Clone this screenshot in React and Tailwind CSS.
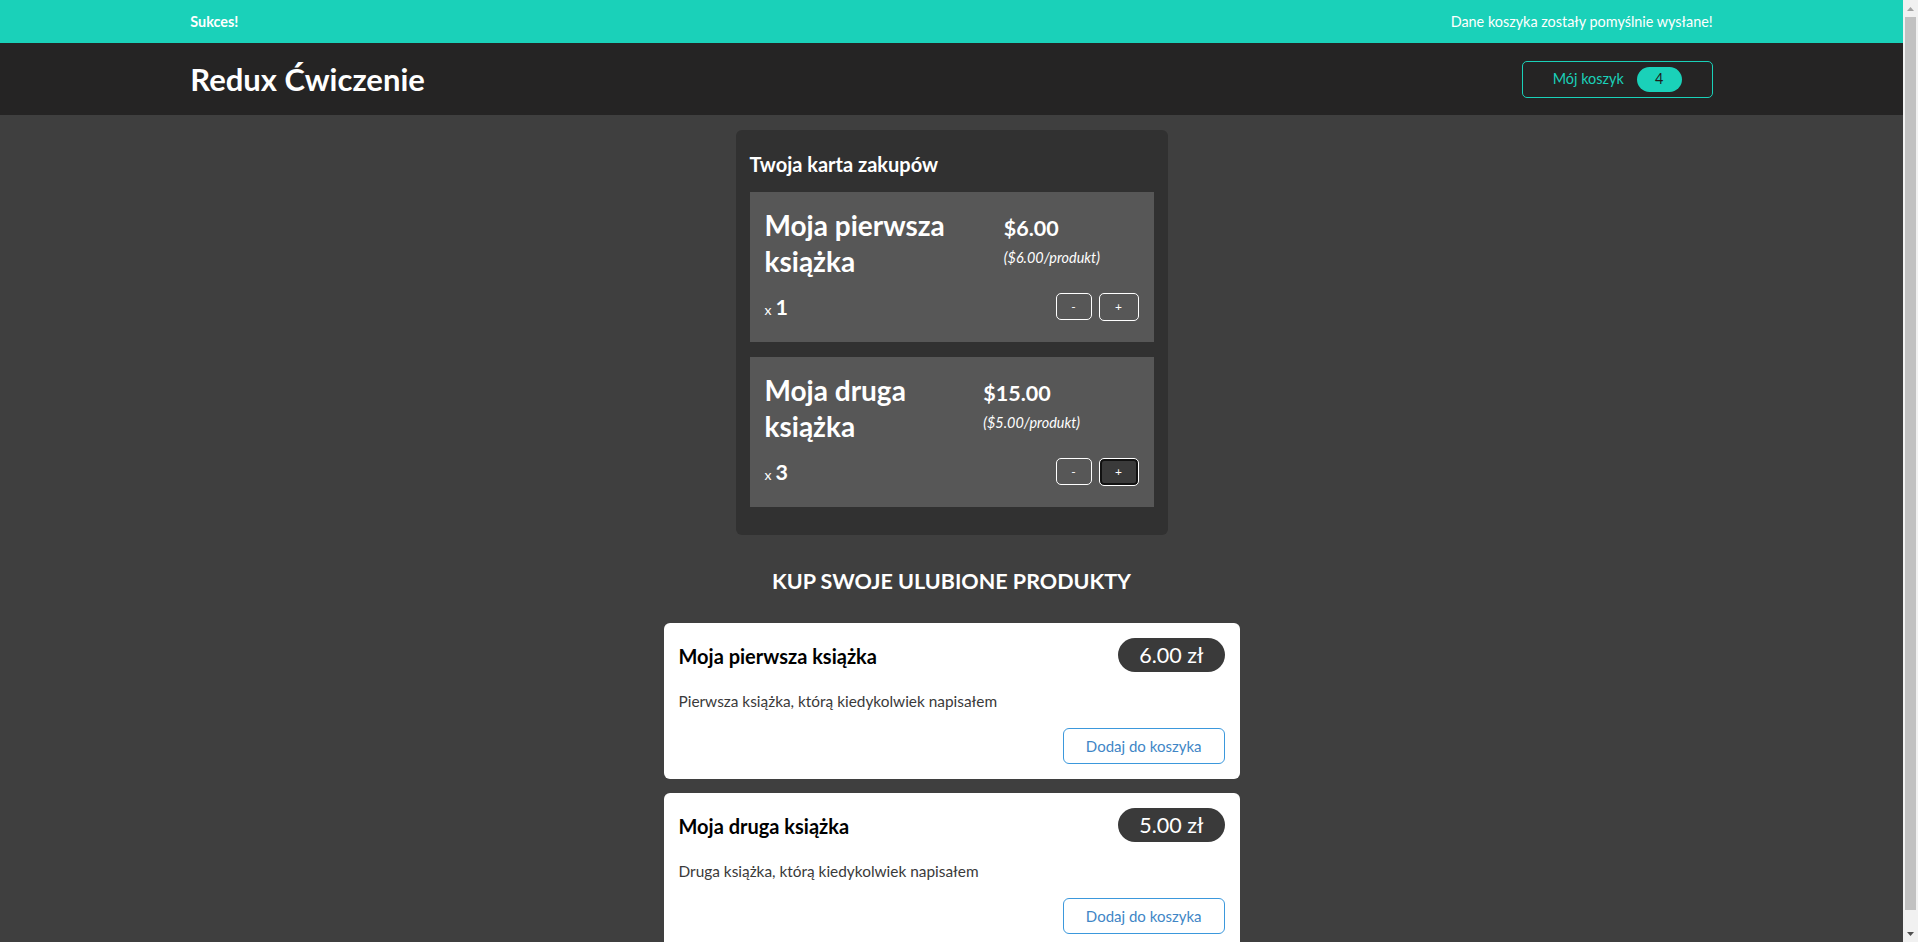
import React from 'react';

const cartItems = [
    { id: 1, title: 'Moja pierwsza książka', total: 6, price: 6, quantity: 1 },
    { id: 2, title: 'Moja druga książka', total: 15, price: 5, quantity: 3, focused: true },
];

const products = [
    { id: 1, title: 'Moja pierwsza książka', price: 6, description: 'Pierwsza książka, którą kiedykolwiek napisałem' },
    { id: 2, title: 'Moja druga książka', price: 5, description: 'Druga książka, którą kiedykolwiek napisałem' },
];

const CartItem = ({ item }) => (
    <li className="bg-[#575757] px-[15px] pt-[15px] pb-[14px] text-white">
        <div className="flex justify-between items-baseline">
            <h3 className="text-[28px] font-bold leading-[36px] mb-[7px]">{item.title}</h3>
            <div className="text-[21.5px] font-bold leading-[27px]">
                ${item.total.toFixed(2)}{' '}
                <span className="text-[14.4px] font-normal italic">(${item.price.toFixed(2)}/produkt)</span>
            </div>
        </div>
        <div className="flex justify-between items-center">
            <div className="flex items-baseline">
                <span className="text-[14px]">x</span>
                <span className="text-[21.5px] font-bold ml-[4px]">{item.quantity}</span>
            </div>
            <div className="flex gap-[7px] my-[7px]">
                <button className="w-[36px] h-[27px] border border-white rounded-[5px] text-[12px] text-white">-</button>
                <button className={`w-[40px] h-[28px] border border-white rounded-[5px] text-[12px] text-white ${item.focused ? 'bg-[#3a3a3a] shadow-[inset_0_0_0_2px_#111111]' : ''}`}>+</button>
            </div>
        </div>
    </li>
);

const ProductItem = ({ product }) => (
    <li className="bg-white rounded-[6px] px-[15px] pt-[15px] pb-[15px]">
        <div className="flex justify-between items-center">
            <h3 className="text-[20px] font-bold text-black leading-[26px] mt-[2px]">{product.title}</h3>
            <div className="bg-[#3a3a3a] text-white rounded-full h-[34px] px-[21px] flex items-center text-[21.5px]">
                {product.price.toFixed(2)} zł
            </div>
        </div>
        <p className="text-[15.4px] text-[#3a3a3a] mt-[20px] leading-[18px]">{product.description}</p>
        <div className="flex justify-end mt-[18px]">
            <button className="h-[36px] px-[22px] border border-[#3b98dc] rounded-[6px] text-[15px] text-[#3f86c6]">
                Dodaj do koszyka
            </button>
        </div>
    </li>
);

const Scrollbar = () => (
    <div className="w-[15px] h-screen bg-[#f1f1f1] flex flex-col shrink-0">
        <div className="h-[17px] flex items-center justify-center">
            <svg width="7" height="4" viewBox="0 0 7 4"><path d="M3.5 0 L7 4 L0 4 Z" fill="#a3a3a3" /></svg>
        </div>
        <div className="flex-1 mx-[2px] mb-[15px] bg-[#c1c1c1]" />
        <div className="h-[17px] flex items-center justify-center">
            <svg width="7" height="4" viewBox="0 0 7 4"><path d="M0 0 L7 0 L3.5 4 Z" fill="#505050" /></svg>
        </div>
    </div>
);

export default function App() {
    return (
        <div className="flex h-screen overflow-hidden font-['Lato','Noto_Sans',sans-serif]">
            <div className="flex-1 min-w-0 h-screen overflow-hidden bg-[#3f3f3f]">
                <div className="h-[43px] bg-[#1ad1b9] flex justify-between items-center px-[10%] text-white text-[14.4px]">
                    <span className="font-bold">Sukces!</span>
                    <span>Dane koszyka zostały pomyślnie wysłane!</span>
                </div>
                <header className="h-[72px] bg-[#252424] flex justify-between items-center px-[10%]">
                    <h1 className="text-white text-[31px] font-bold">Redux Ćwiczenie</h1>
                    <button className="h-[37px] px-[30px] border border-[#1ad1b9] rounded-[5px] flex items-center text-[#1ad1b9] text-[14.4px]">
                        Mój koszyk
                        <span className="ml-[13px] bg-[#1ad1b9] text-[#1d1d1d] rounded-full h-[25px] w-[45px] flex items-center justify-center">4</span>
                    </button>
                </header>
                <main>
                    <section className="w-[432px] mx-auto mt-[15px] bg-[#313131] rounded-[6px] px-[14px] pt-[21px] pb-[28px]">
                        <h2 className="text-white text-[20px] font-bold leading-[27px] mb-[14px]">Twoja karta zakupów</h2>
                        <ul className="flex flex-col gap-[15px]">
                            {cartItems.map(item => <CartItem key={item.id} item={item} />)}
                        </ul>
                    </section>
                    <section className="w-[576px] mx-auto">
                        <h2 className="text-white text-[21.5px] font-bold uppercase text-center leading-[29px] mt-[32px] mb-[27px]">Kup swoje ulubione produkty</h2>
                        <ul className="flex flex-col gap-[14px]">
                            {products.map(p => <ProductItem key={p.id} product={p} />)}
                        </ul>
                    </section>
                </main>
            </div>
            <Scrollbar />
        </div>
    );
}
